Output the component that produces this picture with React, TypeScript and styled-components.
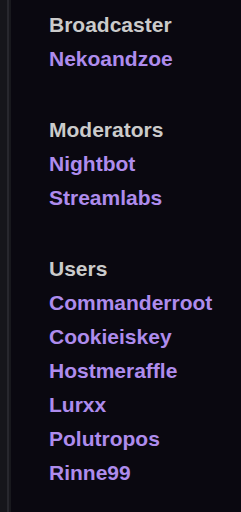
import React from "react";
import styled, { createGlobalStyle } from "styled-components";

const Global = createGlobalStyle`
  html, body {
    margin: 0;
    padding: 0;
    background: #0a0810;
  }
`;

const Shell = styled.div`
  display: flex;
  width: 241px;
  height: 512px;
  background: #0a0810;
  overflow: hidden;
`;

const Edge = styled.div`
  display: flex;
  flex-shrink: 0;
`;

const Strip = styled.div<{ w: number; color: string }>`
  width: ${(p) => p.w}px;
  background: ${(p) => p.color};
`;

const List = styled.div`
  flex: 1;
  padding: 8px 0 0 38px;
  font-family: "Liberation Sans", Arial, sans-serif;
  font-weight: bold;
  font-size: 21px;
  line-height: 34px;
`;

const Group = styled.div`
  & + & {
    margin-top: 37px;
  }
`;

const Heading = styled.div`
  color: #cbcbcb;
`;

const Name = styled.div`
  color: #ae8ced;
`;

interface groupType {
  title: string;
  names: string[];
}

const groups: groupType[] = [
  { title: "Broadcaster", names: ["Nekoandzoe"] },
  { title: "Moderators", names: ["Nightbot", "Streamlabs"] },
  {
    title: "Users",
    names: [
      "Commanderroot",
      "Cookieiskey",
      "Hostmeraffle",
      "Lurxx",
      "Polutropos",
      "Rinne99",
    ],
  },
];

export default function App() {
  return (
    <>
      <Global />
      <Shell>
        <Edge>
          <Strip w={7} color="#16161b" />
          <Strip w={2} color="#28282e" />
          <Strip w={2} color="#18181d" />
        </Edge>
        <List>
          {groups.map((g) => (
            <Group key={g.title}>
              <Heading>{g.title}</Heading>
              {g.names.map((n) => (
                <Name key={n}>{n}</Name>
              ))}
            </Group>
          ))}
        </List>
      </Shell>
    </>
  );
}
